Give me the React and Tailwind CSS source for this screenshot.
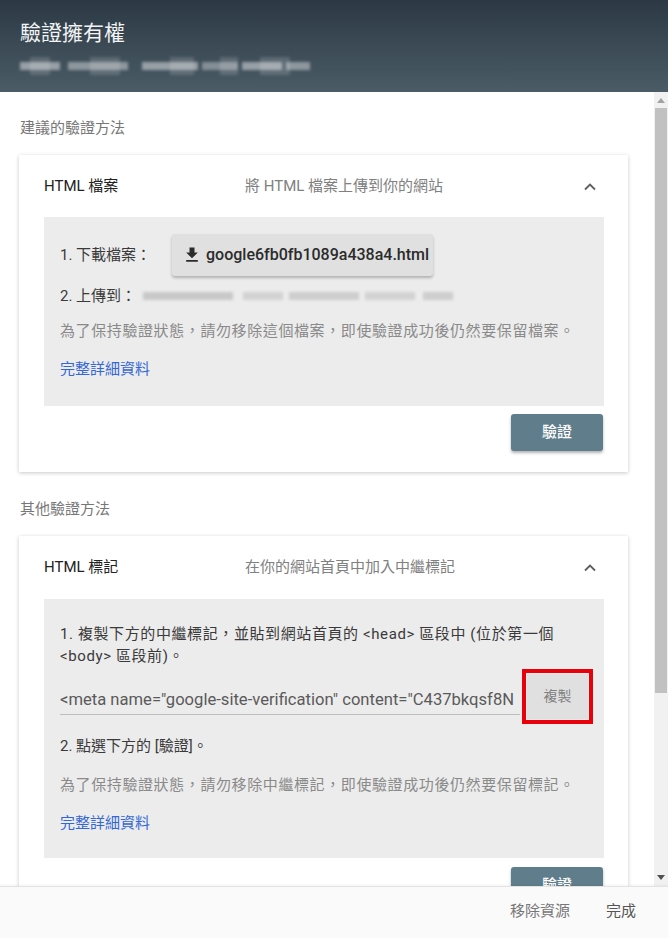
import React from "react";

const FONT = "font-['Roboto','Noto_Sans_CJK_TC',sans-serif]";

function Chevron() {
  return (
    <svg width="14" height="9" viewBox="0 0 14 9" className="shrink-0">
      <polyline points="2,7.5 7,2.5 12,7.5" fill="none" stroke="#5f5f5f" strokeWidth="1.8" />
    </svg>
  );
}

function DownloadIcon() {
  return (
    <svg width="20" height="20" viewBox="0 0 24 24" className="shrink-0">
      <path d="M19 9h-4V3H9v6H5l7 7 7-7zM5 18v2h14v-2H5z" fill="#2b2b2b" />
    </svg>
  );
}

function VerifyButton() {
  return (
    <button className="w-[92px] h-[37px] rounded-[3px] bg-[#607d8b] text-white text-[15px] font-medium shadow-[0_2px_3px_rgba(0,0,0,0.3)]">
      驗證
    </button>
  );
}

function CardHeader({ title, desc }) {
  return (
    <div className="flex items-center pl-[25px] pr-[31px]">
      <div className="w-[201px] text-[15px] text-[#222]">{title}</div>
      <div className="flex-1 text-[15px] text-[#808080]">{desc}</div>
      <Chevron />
    </div>
  );
}

function HeaderBlur() {
  const blocks = [
    [0, 40, 0.45], [48, 60, 0.4], [122, 56, 0.45], [182, 36, 0.35], [222, 40, 0.45], [266, 24, 0.4],
  ];
  return (
    <div className="relative mt-[10px] h-[18px] w-[290px] blur-[1.5px]">
      {blocks.map(([l, w, o], i) => (
        <div key={i} className="absolute top-[5px] h-[8px] bg-white" style={{ left: l, width: w, opacity: o }} />
      ))}
      {[[10, 20], [70, 30], [150, 24], [200, 18], [240, 30]].map(([l, w], i) => (
        <div key={"b" + i} className="absolute top-0 h-[18px] bg-white/15" style={{ left: l, width: w }} />
      ))}
    </div>
  );
}

function UploadBlur() {
  const blocks = [
    [0, 90, 0.35], [100, 40, 0.25], [146, 70, 0.3], [222, 50, 0.25], [280, 30, 0.3],
  ];
  return (
    <div className="relative h-[16px] w-[310px] blur-[1.5px]">
      {blocks.map(([l, w, o], i) => (
        <div key={i} className="absolute top-[4px] h-[8px] bg-[#888]" style={{ left: l, width: w, opacity: o }} />
      ))}
    </div>
  );
}

export default function App() {
  return (
    <div className={`${FONT} w-[668px] h-[938px] flex flex-col bg-white overflow-hidden`}>
      {/* Header */}
      <div className="h-[92px] shrink-0 bg-linear-to-b from-[#2c3944] to-[#4b5c67] pl-[20px] pt-[19px]">
        <div className="text-[21px] leading-[28px] text-[#f2f4f5]">驗證擁有權</div>
        <HeaderBlur />
      </div>

      {/* Body */}
      <div className="flex flex-1 min-h-0">
        <div className="flex-1 overflow-hidden">
          <div className="pt-[26px] pl-[20px] text-[15px] leading-[20px] text-[#777]">建議的驗證方法</div>

          {/* Card 1 */}
          <div className="mt-[17px] ml-[19px] w-[609px] bg-white shadow-[0_1px_4px_rgba(0,0,0,0.22)] pb-[21px]">
            <div className="h-[62px] flex items-center">
              <div className="flex-1">
                <CardHeader title="HTML 檔案" desc="將 HTML 檔案上傳到你的網站" />
              </div>
            </div>
            <div className="ml-[25px] mr-[24px] bg-[#ececec] pl-[16px] pt-[17px] pb-[27px]">
              <div className="flex items-center h-[42px]">
                <div className="w-[112px] text-[15px] text-[#3a3a3a]">1. 下載檔案：</div>
                <button className="w-[261px] h-[42px] flex items-center gap-[4px] pl-[10px] rounded-[3px] bg-[#e0e0e0] shadow-[0_2px_3px_rgba(0,0,0,0.25)] text-[16px] font-medium text-[#2b2b2b]">
                  <DownloadIcon />
                  <span>google6fb0fb1089a438a4.html</span>
                </button>
              </div>
              <div className="mt-[10px] flex items-center h-[20px]">
                <div className="w-[83px] text-[15px] leading-[20px] text-[#3a3a3a]">2. 上傳到：</div>
                <UploadBlur />
              </div>
              <div className="mt-[15px] text-[15px] leading-[20px] text-[#8a8a8a] tracking-[0.6px]">
                為了保持驗證狀態，請勿移除這個檔案，即使驗證成功後仍然要保留檔案。
              </div>
              <div className="mt-[18px] text-[15px] leading-[20px] text-[#3367d6]">完整詳細資料</div>
            </div>
            <div className="mt-[8px] mr-[25px] flex justify-end">
              <VerifyButton />
            </div>
          </div>

          <div className="mt-[27px] pl-[20px] text-[15px] leading-[20px] text-[#777]">其他驗證方法</div>

          {/* Card 2 */}
          <div className="mt-[17px] ml-[19px] w-[609px] bg-white shadow-[0_1px_4px_rgba(0,0,0,0.22)] pb-[21px]">
            <div className="h-[63px] flex items-center">
              <div className="flex-1">
                <CardHeader title="HTML 標記" desc="在你的網站首頁中加入中繼標記" />
              </div>
            </div>
            <div className="ml-[25px] mr-[24px] bg-[#ececec] pl-[16px] pt-[24px] pb-[25px]">
              <div className="text-[15px] leading-[22px] text-[#3a3a3a] tracking-[0.6px] pr-[20px]">
                1. 複製下方的中繼標記，並貼到網站首頁的 &lt;head&gt; 區段中 (位於第一個 &lt;body&gt; 區段前)。
              </div>
              <div className="mt-[2px] flex items-end">
                <div className="w-[460px] h-[28px] mb-[9px] border-b border-[#bdbdbd] overflow-hidden whitespace-nowrap text-[16.6px] leading-[26px] text-[#5a5a5a]">
                  &lt;meta name="google-site-verification" content="C437bkqsf8N
                </div>
                <div className="ml-[2px] w-[71px] h-[55px] border-4 border-[#e8000b] p-[1px]">
                  <div className="w-full h-full bg-[#e0e0e0] flex items-center justify-center text-[14px] text-[#808080]">
                    複製
                  </div>
                </div>
              </div>
              <div className="mt-[12px] text-[15px] leading-[20px] text-[#3a3a3a]">2. 點選下方的 [驗證]。</div>
              <div className="mt-[19px] text-[15px] leading-[20px] text-[#8a8a8a] tracking-[0.6px]">
                為了保持驗證狀態，請勿移除中繼標記，即使驗證成功後仍然要保留標記。
              </div>
              <div className="mt-[18px] text-[15px] leading-[20px] text-[#3367d6]">完整詳細資料</div>
            </div>
            <div className="mt-[9px] mr-[25px] flex justify-end">
              <VerifyButton />
            </div>
          </div>
        </div>

        {/* Scrollbar */}
        <div className="w-[14px] shrink-0 bg-[#f1f1f1] flex flex-col">
          <div className="h-[16px] flex items-center justify-center">
            <svg width="8" height="5" viewBox="0 0 8 5"><polygon points="0,5 4,0 8,5" fill="#a3a3a3" /></svg>
          </div>
          <div className="h-[585px] mx-[1px] bg-[#c1c1c1]" />
          <div className="flex-1" />
          <div className="h-[18px] flex items-center justify-center">
            <svg width="8" height="5" viewBox="0 0 8 5"><polygon points="0,0 8,0 4,5" fill="#505050" /></svg>
          </div>
        </div>
      </div>

      {/* Footer */}
      <div className="h-[52px] shrink-0 bg-[#fafafa] border-t border-[#e3e3e3] shadow-[0_-1px_2px_rgba(0,0,0,0.05)] flex items-center justify-end gap-[36px] pr-[32px] pb-[2px]">
        <span className="text-[15px] text-[#777]">移除資源</span>
        <span className="text-[15px] text-[#555]">完成</span>
      </div>
    </div>
  );
}
